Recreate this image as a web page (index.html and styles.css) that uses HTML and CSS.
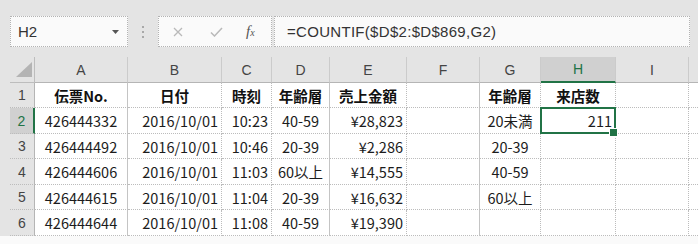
FILE: index.html
```html
<!DOCTYPE html>
<html lang="ja">
<head>
<meta charset="utf-8">
<link rel="stylesheet" href="styles.css">
</head>
<body>
<div class="toolbar">
  <div class="namebox"><span>H2</span><svg class="dd" width="7" height="4" viewBox="0 0 7 4"><polygon points="0,0 7,0 3.5,4" fill="#555"/></svg></div>
  <div class="grip"><i></i><i></i><i></i></div>
  <div class="btnbox">
    <svg class="ico-x" width="10" height="10" viewBox="0 0 10 10"><path d="M1 1 L9 9 M9 1 L1 9" stroke="#b9b9b9" stroke-width="1.3" fill="none"/></svg>
    <svg class="ico-ok" width="13" height="10" viewBox="0 0 13 10"><path d="M1 5.5 L4.5 9 L12 1" stroke="#b9b9b9" stroke-width="1.5" fill="none"/></svg>
    <span class="fx"><i>f</i><small>x</small></span>
  </div>
  <div class="formula">=COUNTIF($D$2:$D$869,G2)</div>
</div>
<div class="sheet">
  <div class="corner"><svg width="24" height="25" viewBox="0 0 24 25"><polygon points="22,5 22,20 6,20" fill="#b4b4b4"/></svg></div>
  <div class="ch">A</div><div class="ch">B</div><div class="ch">C</div><div class="ch">D</div><div class="ch">E</div><div class="ch">F</div><div class="ch">G</div><div class="ch hl">H</div><div class="ch">I</div><div class="ch last"></div>

  <div class="rh">1</div>
  <div class="cell c b sr">伝票No.</div><div class="cell c b">日付</div><div class="cell c b">時刻</div><div class="cell c b sr">年齢層</div><div class="cell c b">売上金額</div><div class="cell sr"></div><div class="cell c b">年齢層</div><div class="cell c b">来店数</div><div class="cell"></div><div class="cell last"></div>

  <div class="rh hl">2</div>
  <div class="cell c sr">426444332</div><div class="cell r">2016/10/01</div><div class="cell r">10:23</div><div class="cell c sr">40-59</div><div class="cell r">¥28,823</div><div class="cell sr"></div><div class="cell c">20未満</div><div class="cell r sel">211</div><div class="cell"></div><div class="cell last"></div>

  <div class="rh">3</div>
  <div class="cell c sr">426444492</div><div class="cell r">2016/10/01</div><div class="cell r">10:46</div><div class="cell c sr">20-39</div><div class="cell r">¥2,286</div><div class="cell sr"></div><div class="cell c">20-39</div><div class="cell"></div><div class="cell"></div><div class="cell last"></div>

  <div class="rh">4</div>
  <div class="cell c sr">426444606</div><div class="cell r">2016/10/01</div><div class="cell r">11:03</div><div class="cell c sr">60以上</div><div class="cell r">¥14,555</div><div class="cell sr"></div><div class="cell c">40-59</div><div class="cell"></div><div class="cell"></div><div class="cell last"></div>

  <div class="rh">5</div>
  <div class="cell c sr">426444615</div><div class="cell r">2016/10/01</div><div class="cell r">11:04</div><div class="cell c sr">20-39</div><div class="cell r">¥16,632</div><div class="cell sr"></div><div class="cell c">60以上</div><div class="cell"></div><div class="cell"></div><div class="cell last"></div>

  <div class="rh">6</div>
  <div class="cell c sr">426444644</div><div class="cell r">2016/10/01</div><div class="cell r">11:08</div><div class="cell c sr">40-59</div><div class="cell r">¥19,390</div><div class="cell sr"></div><div class="cell c"></div><div class="cell"></div><div class="cell"></div><div class="cell last"></div>
</div>
<div class="foot"></div>
</body>
</html>
```
FILE: styles.css
```css
* { box-sizing: border-box; margin: 0; padding: 0; }
html, body { width: 698px; height: 244px; overflow: hidden; }
body {
  background: #e4e4e4;
  font-family: "Liberation Sans", Arial, sans-serif;
}

.toolbar {
  display: flex;
  align-items: flex-start;
  height: 57px;
  padding: 16px 0 0 10px;
}
.namebox {
  width: 118px;
  height: 31px;
  background: #fafafa;
  border: 1px dotted #b3b3b3;
  display: flex;
  align-items: center;
  justify-content: space-between;
  padding: 0 8px 0 7px;
  font-size: 15px;
  color: #333;
}
.grip {
  width: 30px;
  height: 31px;
  display: flex;
  flex-direction: column;
  align-items: center;
  justify-content: center;
  gap: 3px;
}
.grip i { display: block; width: 2px; height: 2px; background: #a8a8a8; }
.btnbox {
  width: 114px;
  height: 31px;
  background: #fafafa;
  border: 1px dotted #b3b3b3;
  display: flex;
  align-items: center;
  padding-left: 14px;
}
.ico-ok { margin-left: 27px; }
.fx {
  margin-left: 23px;
  font-family: "Liberation Serif", serif;
  font-style: italic;
  font-size: 15px;
  color: #555;
  line-height: 1;
}
.fx small { font-size: 10px; }
.formula {
  margin-left: 2px;
  width: 416px;
  height: 31px;
  background: #fafafa;
  border: 1px dotted #b3b3b3;
  display: flex;
  align-items: center;
  padding-left: 12px;
  font-size: 15px;
  letter-spacing: 0.3px;
  color: #333;
}

.sheet {
  margin-left: 10px;
  display: grid;
  grid-template-columns: 25px 93px 94px 50px 58px 77px 73px 61px 75px 73px 1fr;
  grid-template-rows: 26px 25px 26px 25px 26px 25px 26px;
}
.corner {
  background: #e4e4e4;
  border-right: 1px solid #bdbdbd;
  border-bottom: 1px solid #bdbdbd;
}
.corner svg { display: block; }
.ch {
  background: #e4e4e4;
  border-right: 1px solid #cbcbcb;
  border-bottom: 1px solid #b5b5b5;
  display: flex;
  align-items: center;
  justify-content: center;
  font-size: 14px;
  color: #444;
}
.ch.last { border-right: none; }
.ch.hl {
  background: #d0d0d0;
  color: #217346;
  border-bottom: 2px solid #217346;
}
.rh {
  background: #e4e4e4;
  border-right: 1px solid #b5b5b5;
  border-bottom: 1px dotted #bcbcbc;
  display: flex;
  align-items: center;
  justify-content: center;
  font-size: 14px;
  color: #444;
}
.rh.hl {
  background: #d0d0d0;
  color: #217346;
  border-right: 2px solid #217346;
}
.cell {
  background: #fff;
  border-right: 1px dotted #bcbcbc;
  border-bottom: 1px dotted #bcbcbc;
  display: flex;
  align-items: center;
  padding: 0 3px;
  font-family: "Noto Sans CJK JP", "Noto Sans", sans-serif;
  font-size: 14.5px;
  color: #1c1c1c;
  white-space: nowrap;
}
.cell.last { border-right: none; }
.cell.sr { border-right: 1px solid #c4c4c4; }
.cell.c { justify-content: center; }
.cell.r { justify-content: flex-end; }
.cell.b { font-weight: 700; color: #111; }
.sel { position: relative; z-index: 2; }
.sel::after {
  content: "";
  position: absolute;
  top: -1px; left: -1px; right: -1px; bottom: -1px;
  border: 2px solid #217346;
}
.sel::before {
  content: "";
  position: absolute;
  right: -3px;
  bottom: -4px;
  width: 7px;
  height: 7px;
  background: #217346;
  border: 1px solid #fff;
  z-index: 3;
}
.foot { height: 8px; background: #fafafa; }
```
